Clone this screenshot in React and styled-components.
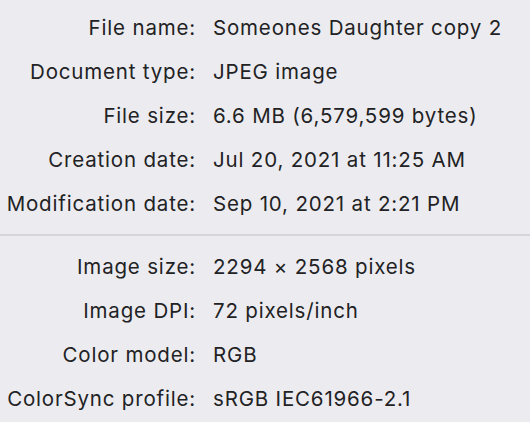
import React from "react";
import styled, { createGlobalStyle } from "styled-components";

const GlobalStyle = createGlobalStyle`
  html, body {
    margin: 0;
    padding: 0;
    background: #ececf0;
  }
  body {
    font-family: Inter, "Noto Sans", "Liberation Sans", sans-serif;
    -webkit-font-smoothing: antialiased;
  }
`;

const general = [
  ["File name:", "Someones Daughter copy 2"],
  ["Document type:", "JPEG image"],
  ["File size:", "6.6 MB (6,579,599 bytes)"],
  ["Creation date:", "Jul 20, 2021 at 11:25 AM"],
  ["Modification date:", "Sep 10, 2021 at 2:21 PM"],
];

const image = [
  ["Image size:", "2294 × 2568 pixels"],
  ["Image DPI:", "72 pixels/inch"],
  ["Color model:", "RGB"],
  ["ColorSync profile:", "sRGB IEC61966-2.1"],
];

const InfoSection = ({ rows }) => (
  <Grid>
    {rows.map(([label, value]) => (
      <React.Fragment key={label}>
        <Label>{label}</Label>
        <Value>{value}</Value>
      </React.Fragment>
    ))}
  </Grid>
);

const App = () => {
  return (
    <Panel>
      <GlobalStyle />
      <Section $top={5}>
        <InfoSection rows={general} />
      </Section>
      <Divider />
      <Section $top={8}>
        <InfoSection rows={image} />
      </Section>
    </Panel>
  );
};

export default App;

const Panel = styled.div`
  width: 530px;
  height: 422px;
  overflow: hidden;
  background: #ececf0;
  color: #222224;
`;

const Section = styled.section`
  padding-top: ${(p) => p.$top}px;
`;

const Grid = styled.div`
  display: grid;
  grid-template-columns: 196px 1fr;
  grid-auto-rows: 44px;
  column-gap: 17px;
  align-items: center;
  font-size: 20.5px;
  letter-spacing: 0.82px;
`;

const Label = styled.div`
  text-align: right;
  white-space: nowrap;
`;

const Value = styled.div`
  white-space: nowrap;
`;

const Divider = styled.hr`
  margin: 9px 0 0;
  border: none;
  height: 2px;
  background: #d6d6da;
`;
